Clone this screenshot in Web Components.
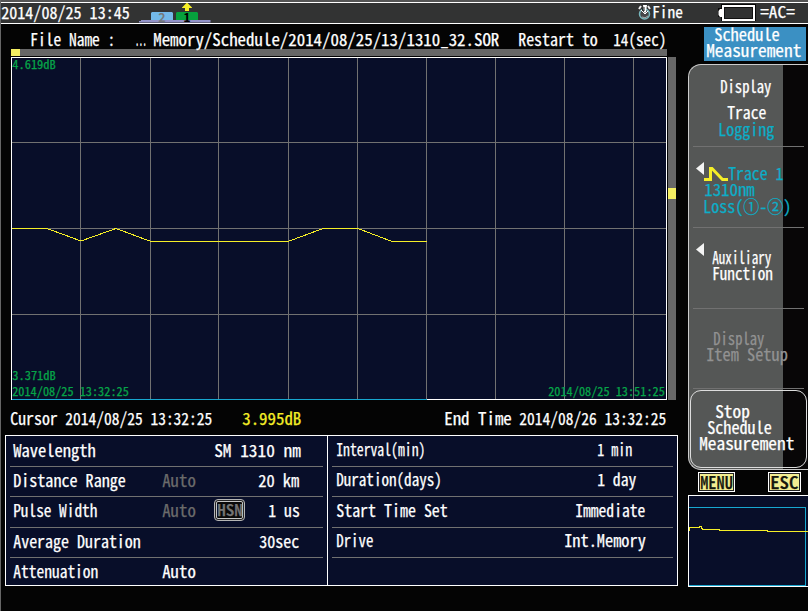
<!DOCTYPE html>
<html lang="en">
<head>
<meta charset="utf-8">
<title>Schedule Measurement</title>
<style>
html,body{margin:0;background:#040404}
body{width:808px;height:611px;overflow:hidden;font-family:"Noto Sans CJK JP","Liberation Sans",sans-serif;color:#fff}
</style>
</head>
<body>
<otdr-screen></otdr-screen>
<script>
const define = (name, html, setup) => {
  const t = document.createElement('template');
  t.innerHTML = html;
  customElements.define(name, class extends HTMLElement {
    constructor() {
      super();
      this.attachShadow({ mode: 'open' }).append(t.content.cloneNode(true));
    }
    connectedCallback() { if (setup) setup(this, this.shadowRoot); }
  });
};

/* Half-width terminal text fitted to a given width; s = font size, m = left margin */
define('lcd-text', `<style>
:host{display:block;height:16px;flex:none;font-size:17px;line-height:13px;white-space:pre}
span{display:inline-block;transform-origin:0 0;font-feature-settings:"hwid" 1;font-weight:400;-webkit-text-stroke:.25px currentColor}
:host([bold]) span{font-weight:500}
</style><span></span>`, (host, root) => {
  const span = root.querySelector('span');
  span.textContent = host.getAttribute('t');
  const w = +host.getAttribute('w');
  if (host.hasAttribute('s')) host.style.fontSize = host.getAttribute('s') + 'px';
  if (host.hasAttribute('m')) host.style.marginLeft = host.getAttribute('m') + 'px';
  if (host.hasAttribute('c')) host.style.color = host.getAttribute('c');
  host.style.width = w + 'px';
  const k = (w + 1.6) / span.offsetWidth;
  span.style.transform = `translateX(-0.8px) scaleX(${k})`;
});

define('status-bar', `<style>
:host{display:flex;box-sizing:border-box;height:24px;border-top:2px solid #555;background:#323333;box-shadow:inset 0 1px #fff,inset 0 -1px #fff;padding-top:3px}
svg{display:block;flex:none;margin-top:-3px;overflow:visible}
</style>
<lcd-text t="2014/08/25 13:45" w="127" m="1"></lcd-text>
<svg style="margin-left:9px" width="74" height="22" viewBox="138 2 74 22">
 <path d="M141 20H210.500V22.500H139V21H141Z" fill="#9292c8"/>
 <path d="M152 12H172L173 13V20H151V13Z" fill="#73b9e8"/>
 <path d="M177 12H197L198 13V20H176V13Z" fill="#06a13d"/>
 <path d="M186.500 3H187.500L192 7.500V8H189V11H185V8H182V7.500Z" fill="#f5ee27"/>
 <g font-family="Noto Sans CJK JP,sans-serif" font-size="12.500" font-weight="700" text-anchor="middle">
  <text x="162" y="22" fill="#74797c">2</text><text x="187" y="22" fill="#000">1</text></g>
</svg>
<svg style="margin-left:426px" width="14" height="21" viewBox="638 2 14 21">
 <circle cx="644.500" cy="14" r="5" fill="#46484a" stroke="#78b7bd" stroke-width="1.500"/>
 <path d="M639 9L641 6M650 9L648 6" stroke="#eee" stroke-width="2" fill="none"/>
 <path d="M643 5H647L646 12H644Z" fill="#fff"/><path d="M645 6V14L648 11M645 14L641 10" stroke="#fff" fill="none"/>
 <path d="M642 17Q645 19 648 16" stroke="#a9a9a9" fill="none"/><path d="M644 7V11M642 8L643 11" stroke="#222"/>
</svg>
<lcd-text t="Fine" w="29" m="1" s="16.500"></lcd-text>
<svg style="margin-left:35px" width="40" height="21" viewBox="717 2 40 21">
 <path d="M721 4H756V21H721V17H718V8H721Z" fill="#080808"/>
 <path d="M723 6H754V20H723Z" fill="#313232" stroke="#fff" stroke-width="2"/>
 <path d="M724.500 7.500H752.500V18.500H724.500Z" fill="none" stroke="#111"/>
 <path d="M722 9V17H720L718.500 15V11L720 9Z" fill="#fff"/>
</svg>
<lcd-text t="=AC=" w="33" m="4" s="16.500"></lcd-text>`);

define('file-line', `<style>:host{display:flex;height:17px;padding:8px 0 0 31px}</style>
<lcd-text t="File Name :" w="84"></lcd-text>
<lcd-text t="..." w="10" m="21" bold></lcd-text>
<lcd-text t="Memory/Schedule/2014/08/25/13/1310_32.SOR" w="345" m="8"></lcd-text>
<lcd-text t="Restart to" w="78" m="20"></lcd-text>
<lcd-text t="14(sec)" w="52" m="17"></lcd-text>`);

define('trace-plot', `<style>
:host{display:grid;grid-template:7px 1px 343px / 656px 1px 8px;margin-left:11px}
.h,.v{background:#676767}
.h i{display:block;width:9px;height:7px;background:#f4ee62}
.v{grid-area:3/3;padding-top:131px;box-sizing:border-box}
.v i{display:block;height:11px;background:#f4ee62}
.plot{grid-area:3/1;position:relative;background:#080e29}
svg{position:absolute;inset:0}
.in{position:relative;display:flex;flex-direction:column;height:100%}
.dates{display:flex}
</style>
<div class="h"><i></i></div>
<div class="plot">
 <svg width="656" height="343" viewBox="11 57 656 343" shape-rendering="crispEdges" fill="none">
  <path stroke="#717171" d="M80.500 57V399M150.500 57V399M218.500 57V399M288.500 57V399M357.500 57V399M426.500 57V399M495.500 57V399M564.500 57V399M633.500 57V399M11 142.500H667M11 228.500H667M11 314.500H667"/>
  <rect x="11.500" y="57.500" width="655" height="342" stroke="#fff"/>
  <path stroke="#17a7cf" d="M12 399.500H427"/>
  <path stroke="#f5ee27" d="M12 228.500H47L81 241L116 228.500L151 241.500H288L323 228.500H358L392 241.500H427"/>
 </svg>
 <div class="in">
  <lcd-text style="margin-top:0" t="4.619dB" w="42" m="2" s="12" c="#06a448"></lcd-text>
  <lcd-text style="margin-top:295px" t="3.371dB" w="42" m="2" s="12" c="#06a448"></lcd-text>
  <div class="dates">
   <lcd-text t="2014/08/25 13:32:25" w="115" m="2" s="12" c="#06a448"></lcd-text>
   <lcd-text t="2014/08/25 13:51:25" w="115" m="421" s="12" c="#06a448"></lcd-text>
  </div>
 </div>
</div>
<div class="v"><i></i></div>`);

define('cursor-line', `<style>:host{display:flex;height:24px;padding:11px 0 0 11px}</style>
<lcd-text t="Cursor" w="46"></lcd-text>
<lcd-text t="2014/08/25 13:32:25" w="146" m="9"></lcd-text>
<lcd-text t="3.995dB" w="58" m="31" c="#f5ee27"></lcd-text>
<lcd-text t="End Time" w="66" m="144"></lcd-text>
<lcd-text t="2014/08/26 13:32:25" w="146" m="9"></lcd-text>`);

define('setting-row', `<style>
:host{display:flex;box-sizing:border-box;margin:0 4px;padding:6px 0 0 4px;border-bottom:1px solid #717171}
:host([last]){border:0}
</style><slot></slot>`);

define('hsn-badge', `<style>
:host{display:block;box-sizing:border-box;width:31px;height:22px;margin-top:-4px;border:1px solid #b5b5b5;border-radius:4px;padding:1px;background:#252525}
div{box-sizing:border-box;height:18px;border:1px solid #c5c5c5;border-radius:2px;background:#090909;padding:1px 0 0 1px}
</style><div><lcd-text t="HSN" w="24" c="#747474" s="16" bold></lcd-text></div>`);

define('settings-table', `<style>
:host{display:grid;box-sizing:border-box;grid-template-columns:321px 349px;gap:1px;background:#fff;width:673px;height:151px;border:1px solid #fff;margin-left:5px}
.col{background:#080e29;min-width:0;display:grid;grid-template-rows:31px 30px 31px 30px 27px}
.col>:first-child{padding-top:7px}
.col>:nth-child(3){padding-top:6px}
.up>*{padding-top:5px}
.up>:nth-child(odd){padding-top:6px}
.up>:last-child{border-bottom:1px solid #717171}
</style>
<div class="col">
 <setting-row><lcd-text t="Wavelength" w="81"></lcd-text><lcd-text t="SM 1310 nm" w="85" m="120"></lcd-text></setting-row>
 <setting-row><lcd-text t="Distance Range" w="111"></lcd-text><lcd-text t="Auto" w="32" m="38" c="#6b6b6b"></lcd-text><lcd-text t="20 km" w="40" m="64"></lcd-text></setting-row>
 <setting-row><lcd-text t="Pulse Width" w="83"></lcd-text><lcd-text t="Auto" w="32" m="66" c="#6b6b6b"></lcd-text><hsn-badge style="margin-left:19px"></hsn-badge><lcd-text t="1 us" w="30" m="24"></lcd-text></setting-row>
 <setting-row><lcd-text t="Average Duration" w="126"></lcd-text><lcd-text t="30sec" w="39" m="120"></lcd-text></setting-row>
 <setting-row last><lcd-text t="Attenuation" w="84"></lcd-text><lcd-text t="Auto" w="32" m="65"></lcd-text></setting-row>
</div>
<div class="col up">
 <setting-row><lcd-text t="Interval(min)" w="88" m="1"></lcd-text><lcd-text t="1 min" w="34" m="173"></lcd-text></setting-row>
 <setting-row><lcd-text t="Duration(days)" w="104" m="1"></lcd-text><lcd-text t="1 day" w="38" m="157"></lcd-text></setting-row>
 <setting-row><lcd-text t="Start Time Set" w="110" m="1"></lcd-text><lcd-text t="Immediate" w="69" m="129"></lcd-text></setting-row>
 <setting-row><lcd-text t="Drive" w="36" m="1"></lcd-text><lcd-text t="Int.Memory" w="80" m="192"></lcd-text></setting-row>
</div>`);

define('panel-title', `<style>
:host{display:block;width:102px;height:34px;box-sizing:border-box;background:#3b90c3;margin:3px 0 0 16px}
</style>
<lcd-text t="Schedule" w="64" m="11"></lcd-text><lcd-text t="Measurement" w="94" m="3"></lcd-text>`);

/* One softkey slot: contents are stacked, with a hairline beneath */
define('soft-key', `<style>
:host{display:block;box-sizing:border-box;height:81px;position:relative}
:host::after{content:"";position:absolute;left:4px;width:111px;bottom:0;height:1px;background:#717171}
:host([arrow])::before{content:"";position:absolute;left:7px;top:15px;width:8px;height:13px;background:#f4f4f4;clip-path:polygon(100% 0,100% 100%,0 50%)}
</style><slot></slot>`);

define('soft-menu', `<style>
:host{display:block;box-sizing:border-box;height:406px;width:120px;margin-top:3px;border:1px solid #ccc;border-right:0;border-radius:13px 0 0 13px;background:linear-gradient(90deg,#555756 94px,#080607 94px)}
.row{display:flex}
.stop{box-sizing:border-box;width:117px;height:78px;margin:1px 0 0 1px;border:1px solid #ddd;border-radius:11px;padding-top:13px}
</style>
<soft-key style="height:82px;padding-top:14px">
 <lcd-text t="Display" w="50" m="32"></lcd-text>
 <lcd-text style="margin-top:10px" t="Trace" w="38" m="39"></lcd-text>
 <lcd-text style="margin-top:1px" t="Logging" w="55" m="30" c="#0caec8"></lcd-text>
</soft-key>
<soft-key arrow style="padding-top:19px">
 <div class="row"><svg style="margin-left:15px" width="24" height="16" viewBox="0 0 24 16"><path d="M0 13.500H6.500V2.500H8L18.500 13.500H24" fill="none" stroke="#f5ee27" stroke-width="3"/></svg>
 <lcd-text t="Trace 1" w="54" m="1" c="#0caec8"></lcd-text></div>
 <lcd-text t="1310nm" w="49" m="16" c="#0caec8"></lcd-text>
 <lcd-text style="margin-top:1px" t="Loss(①-②)" w="87" m="15" c="#0caec8"></lcd-text>
</soft-key>
<soft-key arrow style="padding-top:22px">
 <lcd-text t="Auxiliary" w="58" m="24"></lcd-text><lcd-text t="Function" w="59" m="24"></lcd-text>
</soft-key>
<soft-key style="height:80px;padding-top:22px">
 <lcd-text t="Display" w="50" m="25" c="#929292"></lcd-text><lcd-text t="Item Setup" w="80" m="18" c="#929292"></lcd-text>
</soft-key>
<div class="stop">
 <lcd-text t="Stop" w="33" m="25"></lcd-text><lcd-text t="Schedule" w="63" m="17"></lcd-text><lcd-text t="Measurement" w="94" m="9"></lcd-text>
</div>`);

define('key-hints', `<style>
:host{display:flex;height:20px;margin:2px 0 0 10px;gap:33px}
div{box-sizing:border-box;height:20px;border:1px solid #fff;background:#f3ee91;box-shadow:inset 0 0 0 1px #222;padding:2px 0 0 2px;width:37px}
div+div{width:33px}
</style>
<div><lcd-text t="MENU" w="31" c="#16170d" bold></lcd-text></div><div><lcd-text t="ESC" w="27" c="#16170d" bold></lcd-text></div>`);

define('trace-overview', `<style>:host{display:block;margin-top:3px}svg{display:block}</style>
<svg width="120" height="92" viewBox="688 495 120 92" shape-rendering="crispEdges" fill="none">
<rect x="688" y="495" width="120" height="92" fill="#080e29"/>
<path d="M808 495.500H688.500V586.500H808" stroke="#fff"/>
<path d="M689 507.500H805.500V585.500H689" stroke="#17a7cf"/>
<path d="M689.500 531V527.500H699V526.500H701V528.500H702V529.500H719V530.500H767V531.500H808" stroke="#f5ee27"/>
</svg>`);

define('otdr-screen', `<style>
:host{display:block;width:808px;height:611px;background:#040404;box-shadow:inset 1px 0 #666;overflow:hidden}
.body{display:grid;grid-template-columns:687px 120px;margin-left:1px}
.left{margin-left:-1px}
status-bar{margin-left:1px}
</style>
<status-bar></status-bar>
<div class="body">
 <div class="left"><file-line></file-line><trace-plot></trace-plot><cursor-line></cursor-line><settings-table></settings-table></div>
 <div><panel-title></panel-title><soft-menu></soft-menu><key-hints></key-hints><trace-overview></trace-overview></div>
</div>`);
</script>
</body>
</html>
